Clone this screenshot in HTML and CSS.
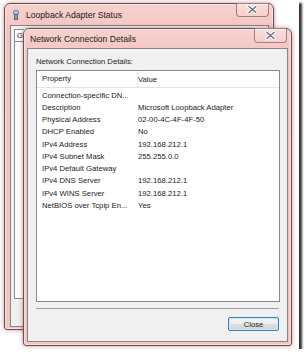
FILE: index.html
```html
<!DOCTYPE html>
<html lang="en">
<head>
    <meta charset="UTF-8">
    <title>Network Connection Details</title>
    <link rel="stylesheet" href="styles.css">
</head>
<body>
    <div class="shot">
        <!-- window behind -->
        <div class="win back">
            <div class="titlebar">
                <svg class="app-icon" width="6" height="10" viewBox="0 0 6 10">
                    <rect x="0.5" y="0.5" width="5" height="4" rx="1" fill="#9cc4e6" stroke="#5f86aa"/>
                    <rect x="1.5" y="4.5" width="3" height="5" fill="#8e99a8" stroke="#5d6570"/>
                </svg>
                <span class="title">Loopback Adapter Status</span>
                <span class="close-btn">
                    <svg width="11" height="9" viewBox="0 0 11 9">
                        <path d="M2 1.5 L9 7.5 M9 1.5 L2 7.5" stroke="#fff" stroke-width="3.4" stroke-linecap="round"/>
                        <path d="M2 1.5 L9 7.5 M9 1.5 L2 7.5" stroke="#6b7280" stroke-width="1.5" stroke-linecap="round"/>
                    </svg>
                </span>
            </div>
            <div class="client">
                <!-- the rest of the tab is hidden behind the front window -->
                <div class="tabs"><span class="tab">G</span></div>
                <div class="tab-panel"></div>
            </div>
        </div>

        <!-- details window -->
        <div class="win front">
            <div class="titlebar">
                <span class="title">Network Connection Details</span>
                <span class="close-btn">
                    <svg width="11" height="9" viewBox="0 0 11 9">
                        <path d="M2 1.5 L9 7.5 M9 1.5 L2 7.5" stroke="#fff" stroke-width="3.4" stroke-linecap="round"/>
                        <path d="M2 1.5 L9 7.5 M9 1.5 L2 7.5" stroke="#6b7280" stroke-width="1.5" stroke-linecap="round"/>
                    </svg>
                </span>
            </div>
            <div class="client">
                <p class="caption">Network Connection Details:</p>
                <div class="listview">
                    <div class="lv-header">
                        <span class="col-prop">Property</span>
                        <span class="col-val">Value</span>
                    </div>
                    <div class="lv-rows">
                        <div class="lv-row"><span class="col-prop">Connection-specific DN...</span><span class="col-val"></span></div>
                        <div class="lv-row"><span class="col-prop">Description</span><span class="col-val">Microsoft Loopback Adapter</span></div>
                        <div class="lv-row"><span class="col-prop">Physical Address</span><span class="col-val">02-00-4C-4F-4F-50</span></div>
                        <div class="lv-row"><span class="col-prop">DHCP Enabled</span><span class="col-val">No</span></div>
                        <div class="lv-row"><span class="col-prop">IPv4 Address</span><span class="col-val">192.168.212.1</span></div>
                        <div class="lv-row"><span class="col-prop">IPv4 Subnet Mask</span><span class="col-val">255.255.0.0</span></div>
                        <div class="lv-row"><span class="col-prop">IPv4 Default Gateway</span><span class="col-val"></span></div>
                        <div class="lv-row"><span class="col-prop">IPv4 DNS Server</span><span class="col-val">192.168.212.1</span></div>
                        <div class="lv-row"><span class="col-prop">IPv4 WINS Server</span><span class="col-val">192.168.212.1</span></div>
                        <div class="lv-row"><span class="col-prop">NetBIOS over Tcpip En...</span><span class="col-val">Yes</span></div>
                    </div>
                </div>
                <div class="footer">
                    <button class="btn">Close</button>
                </div>
            </div>
        </div>
    </div>
</body>
</html>
```

FILE: styles.css
```css
body {
    margin: 0;
    background: #fff;
    font-family: "Liberation Sans", Arial, sans-serif;
}
.shot {
    position: relative;
    width: 299px;
    height: 349px;
    background: #fff;
    box-shadow: 3px 3px 2px rgba(0, 0, 0, 0.8);
}
.win {
    position: absolute;
    box-sizing: border-box;
    display: flex;
    flex-direction: column;
    border: 1px solid #5e5656;
    border-radius: 6px 6px 3px 3px;
    background: linear-gradient(#f7d2ce, #f3c3bf 30px, #f4c6c2);
    box-shadow: 0 0 4px rgba(160, 50, 50, 0.55), inset 0 0 0 1px rgba(255, 255, 255, 0.45);
}
.back {
    left: 4px;
    top: 3px;
    width: 270px;
    height: 327px;
}
.front {
    left: 23px;
    top: 28px;
    width: 269px;
    height: 318px;
}
.titlebar {
    display: flex;
    align-items: flex-start;
    flex: none;
}
.front .titlebar {
    height: 19px;
}
.back .titlebar {
    height: 21px;
}
.title {
    align-self: center;
    font-size: 8.6px;
    color: #1b1b1b;
    white-space: nowrap;
}
.front .title {
    padding-left: 6px;
}
.app-icon {
    align-self: center;
    margin: 0 7px 0 8px;
}
.close-btn {
    margin: -1px 4px 0 auto;
    width: 33px;
    height: 15px;
    box-sizing: border-box;
    border: 1px solid rgba(90, 55, 55, 0.55);
    border-top: none;
    border-radius: 0 0 4px 4px;
    display: flex;
    align-items: center;
    justify-content: center;
    background: linear-gradient(rgba(255, 255, 255, 0.3), rgba(255, 255, 255, 0.08));
}
.back .close-btn {
    height: 14px;
}
.client {
    flex: 1;
    display: flex;
    flex-direction: column;
    background: #f0f0f0;
    border: 1px solid #868686;
}
.front .client {
    margin: 0 3px 3px;
    padding: 7px 7px 0 8px;
}
.back .client {
    margin: 0 4px 2px 5px;
    padding: 3px 6px 0 3px;
}
.tabs {
    display: flex;
}
.tab {
    width: 7px;
    font-size: 7.7px;
    line-height: 11px;
    padding: 0 0 0 2px;
    background: #fff;
    border: 1px solid #898c95;
    border-right: none;
    border-bottom: none;
    color: #1e1e1e;
}
.tab-panel {
    height: 256px;
    background: #fff;
    border: 1px solid #898c95;
}
.caption {
    margin: 0 0 2px;
    font-size: 7.7px;
    line-height: 12px;
    color: #1e1e1e;
}
.listview {
    height: 232px;
    box-sizing: border-box;
    border: 1px solid #828790;
    background: #fff;
    font-size: 7.7px;
    color: #222;
}
.lv-header {
    display: flex;
    align-items: center;
    height: 17px;
    box-sizing: border-box;
    border-bottom: 1px solid #e5e5e5;
}
.lv-header .col-prop {
    width: 95px;
    border-right: 1px solid #e5e5e5;
    line-height: 16px;
}
.lv-rows {
    padding-top: 1px;
}
.lv-row {
    display: flex;
    align-items: center;
    height: 12.25px;
}
.col-prop {
    flex: none;
    width: 96px;
    padding-left: 5px;
    white-space: nowrap;
}
.col-val {
    white-space: nowrap;
}
.footer {
    display: flex;
    flex-direction: column;
    margin: 6px 1px 0 0;
    padding-top: 8px;
    border-top: 1px solid #a0a0a0;
}
.btn {
    align-self: flex-end;
    width: 51px;
    height: 14px;
    padding: 0;
    font-family: "Liberation Sans", Arial, sans-serif;
    font-size: 7.7px;
    color: #1e1e1e;
    border: 1px solid #3c7fb1;
    border-radius: 2px;
    background: linear-gradient(#f4f4f4 0%, #ececec 50%, #dedede 51%, #d2d2d2 100%);
    box-shadow: inset 0 0 0 1px #c9ebfb;
}
```
